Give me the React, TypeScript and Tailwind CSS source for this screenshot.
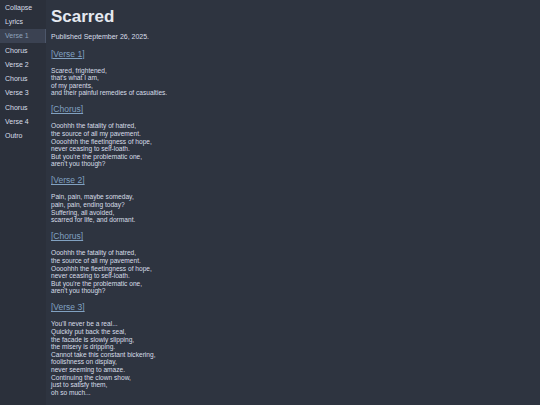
import React from "react";

const sections: { title: string; lines: string[] }[] = [
  { title: "[Verse 1]", lines: ["Scared, frightened,", "that's what I am,", "of my parents,", "and their painful remedies of casualties."] },
  { title: "[Chorus]", lines: ["Ooohhh the fatality of hatred,", "the source of all my pavement.", "Oooohhh the fleetingness of hope,", "never ceasing to self-loath.", "But you're the problematic one,", "aren't you though?"] },
  { title: "[Verse 2]", lines: ["Pain, pain, maybe someday,", "pain, pain, ending today?", "Suffering, all avoided,", "scarred for life, and dormant."] },
  { title: "[Chorus]", lines: ["Ooohhh the fatality of hatred,", "the source of all my pavement.", "Oooohhh the fleetingness of hope,", "never ceasing to self-loath.", "But you're the problematic one,", "aren't you though?"] },
  { title: "[Verse 3]", lines: ["You'll never be a real...", "Quickly put back the seal,", "the facade is slowly slipping,", "the misery is dripping.", "Cannot take this constant bickering,", "foolishness on display,", "never seeming to amaze.", "Continuing the clown show,", "just to satisfy them,", "oh so much..."] },
  { title: "[Verse 4]", lines: ["..."] },
];

const nav = ["Collapse", "Lyrics", "Verse 1", "Chorus", "Verse 2", "Chorus", "Verse 3", "Chorus", "Verse 4", "Outro"];

export default function App() {
  return (
    <div className="flex h-[405px] w-[540px] overflow-hidden bg-[#2e3440] text-[#d8dee9]" style={{ fontFamily: '"Liberation Sans", Arial, sans-serif' }}>
      <nav className="flex w-[46px] shrink-0 flex-col bg-[#2b303b]">
        {nav.map((n, i) => (
          <div
            key={i}
            className={
              "flex h-[14.3px] items-center pl-[5px] text-[7px] leading-none " +
              (i === 2 ? "border-r border-[#4c566a] bg-[#3b4252] text-[#8fa3bb]" : "text-[#d8dee9]")
            }
          >
            {n}
          </div>
        ))}
      </nav>
      <main className="flex-1 pl-[5px]">
        <h1 className="mt-[7px] text-[17px] font-bold leading-[20px] text-[#e5e9f0]">Scarred</h1>
        <p className="mt-[6px] text-[7px] leading-[8px]">Published September 26, 2025.</p>
        {sections.map((s, i) => (
          <section key={i}>
            <h2 className="mt-[6.5px] text-[8.5px] leading-[12px] text-[#81a1c1] underline">{s.title}</h2>
            <div className="mt-[7px] text-[6.6px] leading-[7.6px]">
              {s.lines.map((l, j) => (
                <div key={j}>{l}</div>
              ))}
            </div>
          </section>
        ))}
      </main>
    </div>
  );
}
